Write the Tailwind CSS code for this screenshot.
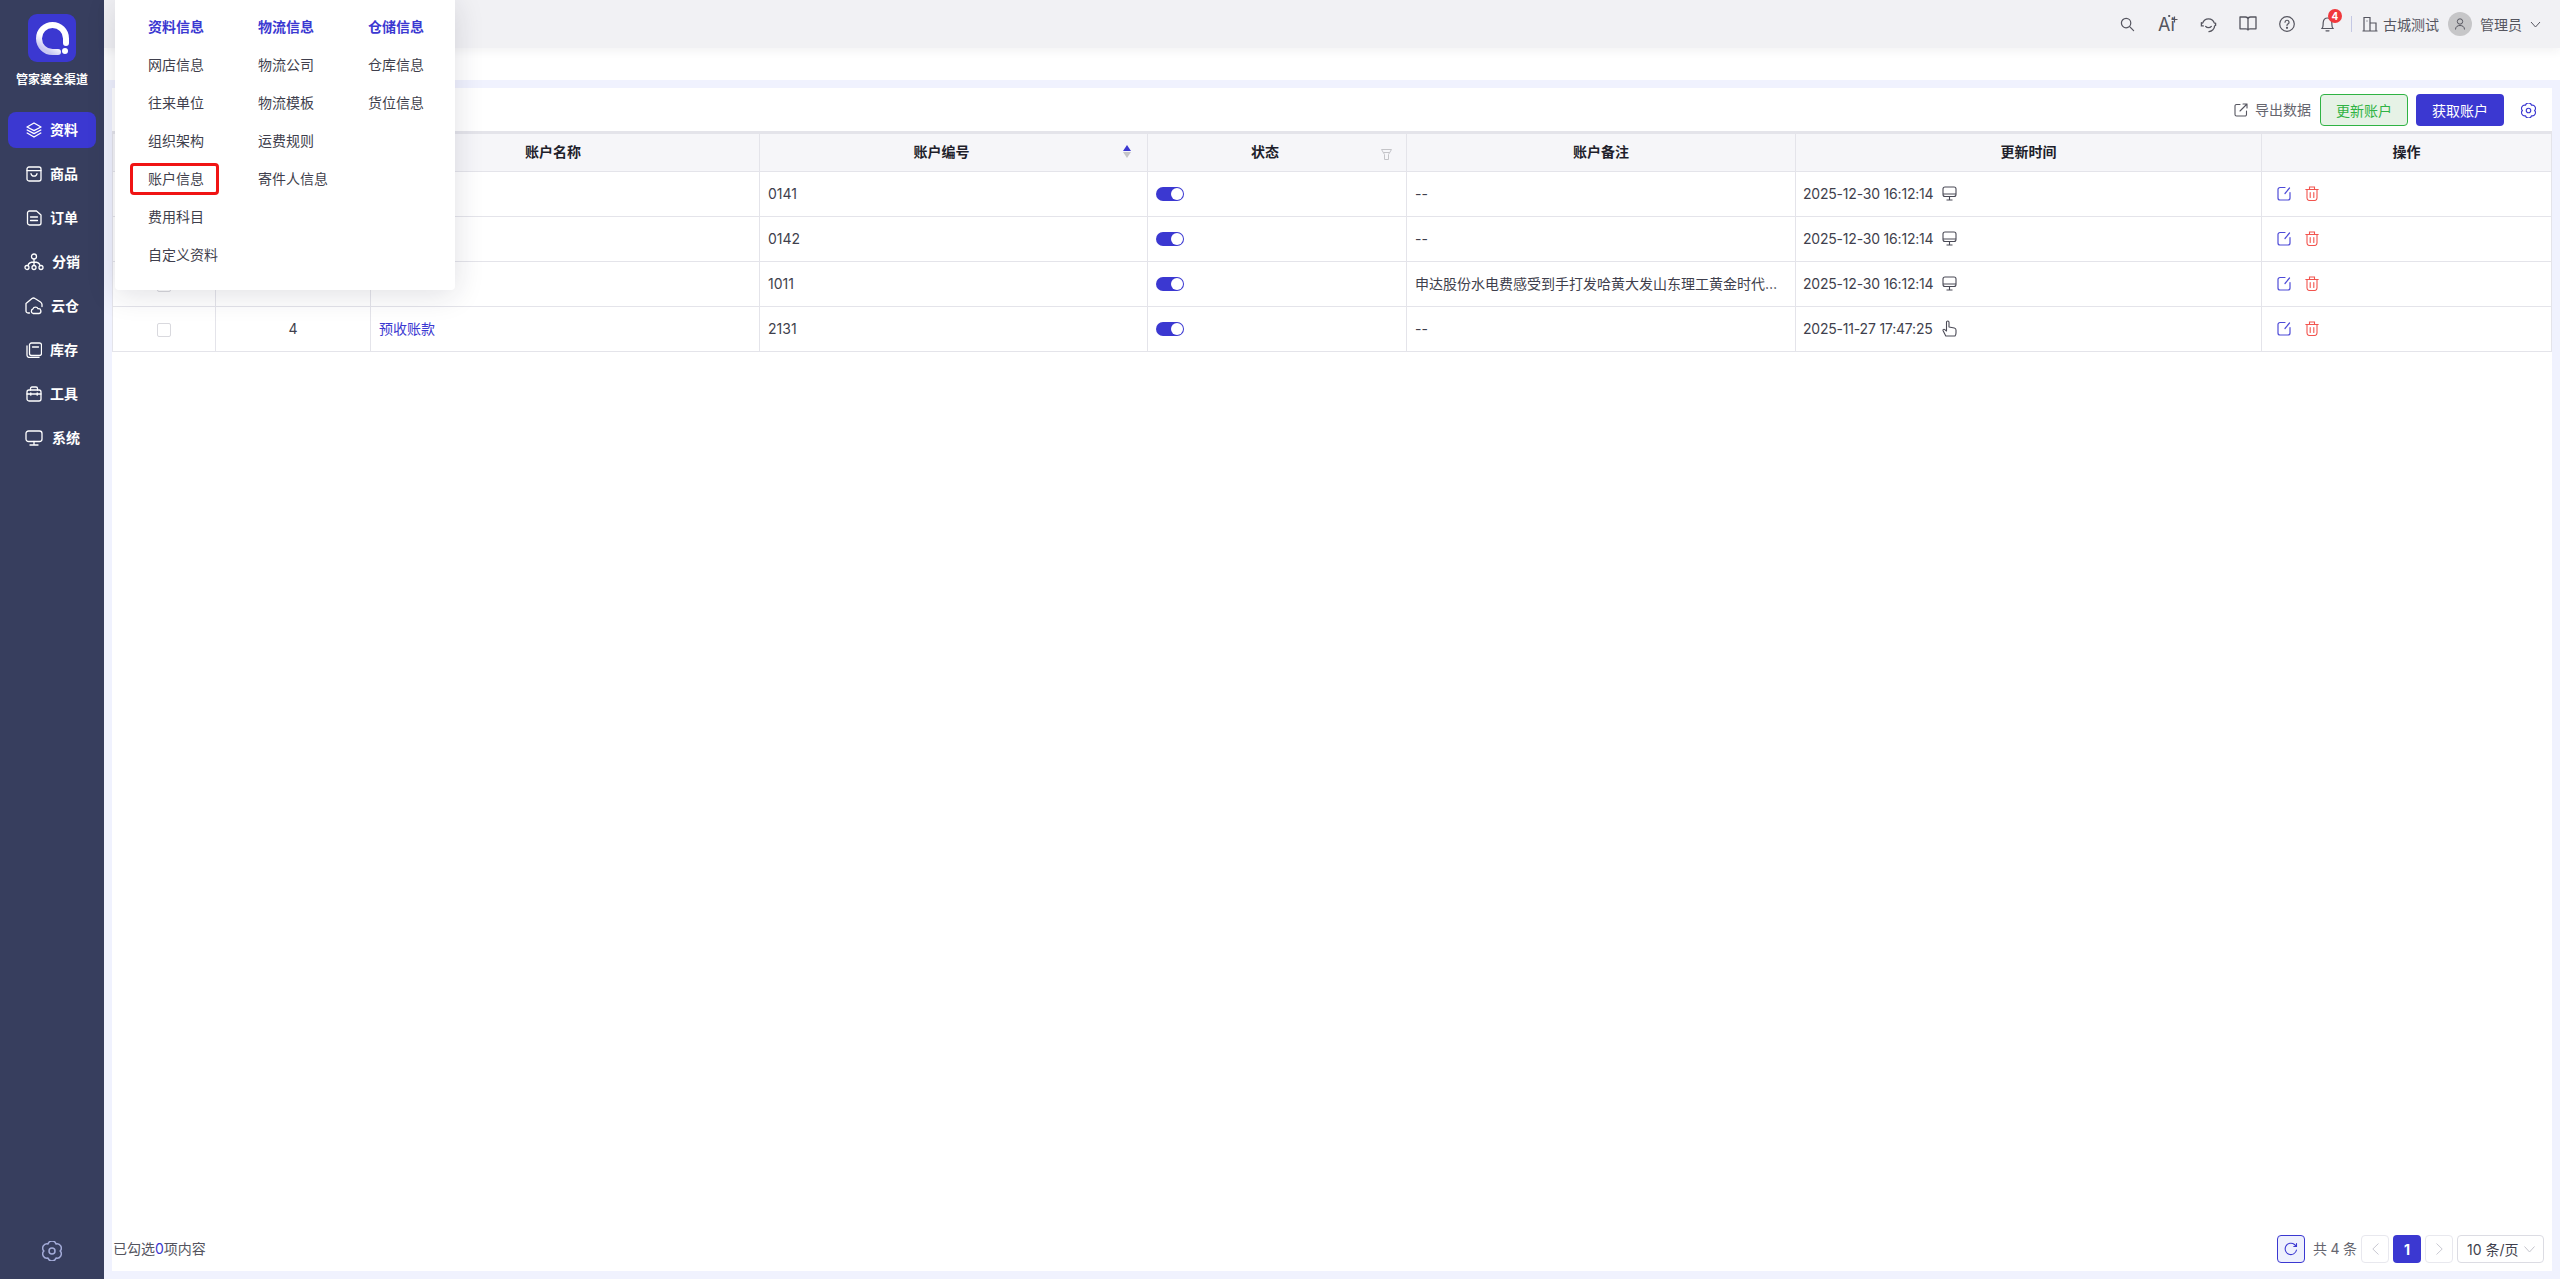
<!DOCTYPE html>
<html lang="zh-CN">
<head>
  <meta charset="UTF-8" />
  <title>账户信息</title>
  <script src="https://cdn.jsdelivr.net/npm/@tailwindcss/browser@4"></script>
</head>
<body class="h-screen overflow-hidden flex bg-white text-[14px] text-[#3f3f4d] font-[Inter,'Noto_Sans_CJK_SC',sans-serif]">

  <!-- left menu -->
  <aside class="w-[104px] shrink-0 bg-[#373e5e] flex flex-col items-center text-white">
    <div class="mt-[14px] w-[48px] h-[48px] rounded-[9px] bg-[#3b38d1] flex items-center justify-center">
      <svg width="36" height="36" viewBox="0 0 36 36" fill="none">
        <defs><linearGradient id="lg" x1="0.7" y1="0.1" x2="0.2" y2="0.9"><stop offset="0" stop-color="#fff"/><stop offset="0.6" stop-color="#fff"/><stop offset="1" stop-color="#c9c8f2"/></linearGradient></defs>
        <path d="M24 32H18.500A13.500 13.500 0 1 1 32 18.500V23" stroke="url(#lg)" stroke-width="6" stroke-linecap="round"/>
        <circle cx="31" cy="31" r="3" fill="#fff"/>
      </svg>
    </div>
    <div class="mt-[10px] text-[12px] leading-[16px] font-bold whitespace-nowrap">管家婆全渠道</div>

    <nav class="mt-[24px] w-[88px] flex flex-col gap-[8px] font-bold">
      <a class="h-[36px] rounded-[8px] bg-[#3b38d1] flex items-center pl-[18px] gap-[8px]">
        <svg class="w-[16px] h-[16px]" viewBox="0 0 16 16" fill="none" stroke="#fff" stroke-width="1.4" stroke-linejoin="round" stroke-linecap="round"><path d="M8 1 15 5 8 8.600 1 5Z"/><path d="M1.200 8 8 11.600 14.800 8"/><path d="M1.200 11 8 15 14.800 11"/></svg>
        <span class="mb-[2px]">资料</span>
      </a>
      <a class="h-[36px] flex items-center pl-[18px] gap-[8px]">
        <svg class="w-[16px] h-[16px]" viewBox="0 0 16 16" fill="none" stroke="#fff" stroke-width="1.3" stroke-linecap="round"><rect x="1" y="1" width="14" height="14" rx="2"/><path d="M1 4.600H15M5 7.600C5.600 11 10.400 11 11 7.600"/></svg>
        <span class="mb-[2px]">商品</span>
      </a>
      <a class="h-[36px] flex items-center pl-[18px] gap-[8px]">
        <svg class="w-[16px] h-[16px]" viewBox="0 0 16 16" fill="none" stroke="#fff" stroke-width="1.3" stroke-linecap="round" stroke-linejoin="round"><path d="M3.500 1H10.500L15 5V13A2 2 0 0 1 13 15H3.500A2 2 0 0 1 1.500 13V3A2 2 0 0 1 3.500 1Z"/><path d="M4.500 7H11.500M4.500 10.500H11.500"/></svg>
        <span class="mb-[2px]">订单</span>
      </a>
      <a class="h-[36px] flex items-center pl-[16px] gap-[8px]">
        <svg class="w-[20px] h-[18px]" viewBox="0 0 20 18" fill="none" stroke="#fff" stroke-width="1.3" stroke-linecap="round"><circle cx="10" cy="3.500" r="2.500"/><circle cx="3" cy="14.500" r="2"/><circle cx="10" cy="14.500" r="2"/><circle cx="17" cy="14.500" r="2"/><path d="M10 6V12.500M4 12.500C4.500 9.800 7 9 10 9S15.500 9.800 16 12.500"/></svg>
        <span class="mb-[2px]">分销</span>
      </a>
      <a class="h-[36px] flex items-center pl-[17px] gap-[8px]">
        <svg class="w-[18px] h-[18px]" viewBox="0 0 18 18" fill="none" stroke="#fff" stroke-width="1.3" stroke-linecap="round" stroke-linejoin="round"><path d="M4.500 16H3A2 2 0 0 1 1 14V6.500L7 1.500C8 .8 9 .8 10 1.500L15.500 5C16.500 5.700 17 6.500 17 7.500V9.500"/><path d="M8 16.500A2.500 2.500 0 0 1 8 11.800C8.600 9.600 12.400 9.600 13 11.800A2.400 2.400 0 0 1 14 16.500Z"/></svg>
        <span class="mb-[2px]">云仓</span>
      </a>
      <a class="h-[36px] flex items-center pl-[18px] gap-[8px]">
        <svg class="w-[16px] h-[16px]" viewBox="0 0 16 16" fill="none" stroke="#fff" stroke-width="1.3" stroke-linecap="round"><rect x="3.500" y="1" width="12" height="12.500" rx="2"/><path d="M1 4V13A2.500 2.500 0 0 0 3.500 15.500H13M6.500 5H12.500"/></svg>
        <span class="mb-[2px]">库存</span>
      </a>
      <a class="h-[36px] flex items-center pl-[18px] gap-[8px]">
        <svg class="w-[16px] h-[16px]" viewBox="0 0 16 16" fill="none" stroke="#fff" stroke-width="1.3" stroke-linecap="round"><rect x="1" y="4" width="14" height="11" rx="2"/><path d="M4.500 4V2.500A1.500 1.500 0 0 1 6 1H10A1.500 1.500 0 0 1 11.500 2.500V4M1 8H15M4.800 7V9.200M11.200 7V9.200"/></svg>
        <span class="mb-[2px]">工具</span>
      </a>
      <a class="h-[36px] flex items-center pl-[17px] gap-[9px]">
        <svg class="w-[18px] h-[16px]" viewBox="0 0 18 16" fill="none" stroke="#fff" stroke-width="1.3" stroke-linecap="round"><rect x="1" y="1" width="16" height="10.500" rx="2.500"/><path d="M9 11.500V15M5 15H13"/></svg>
        <span class="mb-[2px]">系统</span>
      </a>
    </nav>

    <svg class="mt-auto mb-[18px] w-[20px] h-[20px]" viewBox="0 0 16 16" fill="none" stroke="#a3abd8" stroke-width="1.200" stroke-linejoin="round"><path d="M14.500 8A3.400 3.400 0 0 1 11.250 13.630A3.400 3.400 0 0 1 4.750 13.630A3.400 3.400 0 0 1 1.500 8A3.400 3.400 0 0 1 4.750 2.370A3.400 3.400 0 0 1 11.250 2.370A3.400 3.400 0 0 1 14.500 8Z"/><circle cx="8" cy="8" r="2.400"/></svg>
  </aside>

  <div class="flex-1 min-w-0 flex flex-col">
    <!-- top bar -->
    <header class="h-[48px] shrink-0 bg-[#f1f1f4] shadow-[0_4px_8px_rgba(40,40,60,0.05)] relative z-10 flex items-center justify-end pr-[19px] text-[#55555f]">
      <svg class="w-[15px] h-[15px] mr-[23px]" viewBox="0 0 16 16" fill="none" stroke="#55555f" stroke-width="1.3" stroke-linecap="round"><circle cx="6.500" cy="6.500" r="5"/><path d="M10.300 10.300 14.500 14.500"/></svg>
      <div class="relative w-[20px] h-[20px] mr-[22px] text-[18px] leading-[21px] text-[#55555f]">Ai
        <svg class="absolute left-[10px] top-[1px] w-[10px] h-[8px]" viewBox="0 0 10 8" fill="none" stroke="#55555f" stroke-width="1.200"><path d="M6.500 1.500V7.500M3.500 4.500H9.500"/><circle cx="1.200" cy="1" r=".5"/></svg>
      </div>
      <svg class="w-[17px] h-[17px] mr-[22px]" viewBox="0 0 18 18" fill="none" stroke="#55555f" stroke-width="1.4" stroke-linecap="round"><path d="M2.800 7.500A6.500 6.500 0 0 1 15.200 7.500"/><path d="M15.500 10.500A6.500 6.500 0 0 1 9.500 16.500"/><path d="M1.500 7V10.500H3.500M16.500 7.500V10"/><path d="M6 11C7.500 12.800 10.500 12.800 12 11"/></svg>
      <svg class="w-[18px] h-[16px] mr-[22px]" viewBox="0 0 18 16" fill="none" stroke="#55555f" stroke-width="1.3" stroke-linejoin="round"><path d="M1 1H6.500C8 1 9 1.800 9 3.200V14C9 13 8 12.800 7 12.800H1ZM17 1H11.500C10 1 9 1.800 9 3.200V14C9 13 10 12.800 11 12.800H17Z"/></svg>
      <svg class="w-[16px] h-[16px] mr-[26px]" viewBox="0 0 16 16" fill="none" stroke="#55555f" stroke-width="1.200" stroke-linecap="round"><circle cx="8" cy="8" r="7.300"/><path d="M6 6.200A2 2 0 1 1 8.500 8.200C8 8.500 8 9 8 9.600"/><circle cx="8" cy="11.800" r=".5" fill="#55555f"/></svg>
      <div class="relative w-[13px] h-[16px] mr-[17px]">
        <svg class="w-[13px] h-[16px]" viewBox="0 0 13 16" fill="none" stroke="#55555f" stroke-width="1.200" stroke-linecap="round"><path d="M1 12.500C2.500 11 2 9 2.200 6.500 2.500 3.500 4 2 6.500 2S10.500 3.500 10.800 6.500C11 9 10.500 11 12 12.500ZM5 14.800H8"/></svg>
        <span class="absolute left-[7px] top-[-7px] w-[14px] h-[14px] rounded-full bg-[#f0383c] text-white text-[10px] font-bold leading-[14px] text-center">4</span>
      </div>
      <div class="w-px h-[16px] bg-[#c4c8e4] mr-[10px]"></div>
      <svg class="w-[16px] h-[16px] mr-[5px]" viewBox="0 0 16 16" fill="none" stroke="#55555f" stroke-width="1.200"><path d="M.5 15H15.500M2 15V1.500H8V15M8 7H14V15M4.500 5H5.500"/></svg>
      <span class="mr-[9px]">古城测试</span>
      <div class="w-[24px] h-[24px] rounded-full bg-[#c6c6c8] flex items-center justify-center mr-[8px]">
        <svg class="w-[12px] h-[12px]" viewBox="0 0 12 12" fill="none" stroke="#55555f" stroke-width="1"><circle cx="6" cy="3.500" r="2.700"/><path d="M1.500 11.500C1.500 8.800 3.500 7.500 6 7.500S10.500 8.800 10.500 11.500"/></svg>
      </div>
      <span class="mr-[8px]">管理员</span>
      <svg class="w-[11px] h-[7px]" viewBox="0 0 11 7" fill="none" stroke="#55555f" stroke-width="1"><path d="M1 1 5.500 6 10 1"/></svg>
    </header>

    <div class="h-[32px] shrink-0 bg-white"></div>

    <main class="flex-1 min-h-0 bg-[#f0f2fe] p-[8px] flex">
      <section class="flex-1 min-w-0 bg-white flex flex-col">
        <!-- toolbar -->
        <div class="h-[43px] shrink-0 flex items-start justify-end pt-[6px] pr-[16px]">
          <svg class="w-[14px] h-[14px] mt-[9px] mr-[7px]" viewBox="0 0 14 14" fill="none" stroke="#55555f" stroke-width="1.100" stroke-linecap="round" stroke-linejoin="round"><path d="M6 1.500H2.500A1.500 1.500 0 0 0 1 3V11.500A1.500 1.500 0 0 0 2.500 13H11A1.500 1.500 0 0 0 12.500 11.500V8M6 8 13 1M9 1H13V5"/></svg>
          <span class="h-[32px] leading-[32px] text-[#66666f] mr-[9px]">导出数据</span>
          <button class="w-[88px] h-[32px] rounded-[4px] border border-[#2fb344] bg-[#e6f2e6] text-[#2fb344] mr-[8px]">更新账户</button>
          <button class="w-[88px] h-[32px] rounded-[4px] bg-[#3b38d1] text-white mr-[17px]">获取账户</button>
          <svg class="w-[15px] h-[15px] mt-[9px]" viewBox="0 0 16 16" fill="none" stroke="#3b38d1" stroke-width="1.200" stroke-linejoin="round"><path d="M14.500 8A3.400 3.400 0 0 1 11.250 13.630A3.400 3.400 0 0 1 4.750 13.630A3.400 3.400 0 0 1 1.500 8A3.400 3.400 0 0 1 4.750 2.370A3.400 3.400 0 0 1 11.250 2.370A3.400 3.400 0 0 1 14.500 8Z"/><circle cx="8" cy="8" r="2.400"/></svg>
        </div>

        <!-- table -->
        <div class="flex-1 min-h-0">
          <table class="w-full table-fixed border-collapse border-t-[3px] border-t-[#e4e4ea]">
            <colgroup>
              <col class="w-[103px]"/><col class="w-[155px]"/><col class="w-[389px]"/><col class="w-[388px]"/><col class="w-[259px]"/><col class="w-[389px]"/><col class="w-[466px]"/><col/>
            </colgroup>
            <thead>
              <tr class="h-[39px] bg-[#f6f6f9] text-[#1f1f2b]">
                <th class="border border-[#e4e4ea] font-bold"></th>
                <th class="border border-[#e4e4ea] font-bold"></th>
                <th class="border border-[#e4e4ea] font-bold pr-[24px] pb-[2px]">账户名称</th>
                <th class="border border-[#e4e4ea] font-bold relative pr-[24px] pb-[2px]">账户编号
                  <span class="absolute right-[16px] top-[11px] flex flex-col gap-[1px]">
                    <span class="w-0 h-0 border-x-[4px] border-x-transparent border-b-[6px] border-b-[#3b38d1]"></span>
                    <span class="w-0 h-0 border-x-[4px] border-x-transparent border-t-[6px] border-t-[#c4c4c8]"></span>
                  </span>
                </th>
                <th class="border border-[#e4e4ea] font-bold relative pr-[24px] pb-[2px]">状态
                  <svg class="absolute right-[14px] top-[15px] w-[11px] h-[11px]" viewBox="0 0 11 11" fill="none" stroke="#c4c4c8" stroke-width="1"><path d="M.5 .5H10.500L7.500 5.500V10.500H3.500V5.500ZM2.500 3.500H8.500"/></svg>
                </th>
                <th class="border border-[#e4e4ea] font-bold pb-[2px]">账户备注</th>
                <th class="border border-[#e4e4ea] font-bold pb-[2px]">更新时间</th>
                <th class="border border-[#e4e4ea] font-bold pb-[2px]">操作</th>
              </tr>
            </thead>
            <tbody id="rows"></tbody>
          </table>
        </div>

        <!-- footer -->
        <div class="h-[37px] shrink-0 flex items-start pt-[1px] pr-[8px] pl-[1px]">
          <span class="mt-[4px] leading-[20px] text-[#55555f]">已勾选<span class="text-[#3b38d1]">0</span>项内容</span>
          <div class="ml-auto flex items-start">
            <button class="w-[28px] h-[28px] rounded-[4px] border border-[#3b38d1] bg-[#eef0fd] flex items-center justify-center mr-[8px]">
              <svg class="w-[14px] h-[14px]" viewBox="0 0 14 14" fill="none" stroke="#3b38d1" stroke-width="1.100" stroke-linecap="round"><path d="M12.500 8A5.700 5.700 0 1 1 10.500 2.500L12.500 4.500M12.500 1.500V4.500H9.800"/></svg>
            </button>
            <span class="w-[43px] h-[28px] leading-[28px] tracking-[-0.2px] text-[#66666f] whitespace-pre mr-[5px]">共 4 条</span>
            <button class="w-[28px] h-[28px] rounded-[4px] border border-[#e8e8ee] flex items-center justify-center mr-[4px]">
              <svg class="w-[7px] h-[12px]" viewBox="0 0 7 12" fill="none" stroke="#c9c9d2" stroke-width="1"><path d="M6.500 .5 .8 6 6.500 11.500"/></svg>
            </button>
            <button class="w-[28px] h-[28px] rounded-[4px] bg-[#3b38d1] text-white font-bold mr-[4px]">1</button>
            <button class="w-[28px] h-[28px] rounded-[4px] border border-[#e8e8ee] flex items-center justify-center mr-[4px]">
              <svg class="w-[7px] h-[12px]" viewBox="0 0 7 12" fill="none" stroke="#c9c9d2" stroke-width="1"><path d="M.5 .5 6.200 6 .5 11.500"/></svg>
            </button>
            <div class="w-[87px] h-[28px] rounded-[4px] border border-[#dcdce3] flex items-center pl-[9px]">
              <span class="whitespace-pre">10 条/页</span>
              <svg class="w-[11px] h-[7px] ml-[5px]" viewBox="0 0 11 7" fill="none" stroke="#c4c4cc" stroke-width="1"><path d="M.5 .5 5.500 6 10.500 .5"/></svg>
            </div>
          </div>
        </div>
      </section>
    </main>
  </div>

  <!-- open menu -->
  <div class="absolute left-[115px] top-0 w-[340px] h-[290px] bg-white rounded-b-[4px] shadow-[0_4px_30px_rgba(30,30,60,0.14)] z-20 pl-[33px] pt-[7px] grid grid-cols-[110px_110px_110px] auto-rows-[38px] items-center">
    <div class="text-[#3b38d1] font-bold">资料信息</div><div class="text-[#3b38d1] font-bold">物流信息</div><div class="text-[#3b38d1] font-bold">仓储信息</div>
    <div>网店信息</div><div>物流公司</div><div>仓库信息</div>
    <div>往来单位</div><div>物流模板</div><div>货位信息</div>
    <div>组织架构</div><div>运费规则</div><div></div>
    <div class="relative">账户信息<span class="absolute left-[-18px] top-[-5px] w-[89px] h-[32px] border-[3px] border-[#f01414] rounded-[4px]"></span></div><div>寄件人信息</div><div></div>
    <div>费用科目</div><div></div><div></div>
    <div>自定义资料</div><div></div><div></div>
  </div>

  <script>
    const data = [
      { no: 1, name: "", code: "0141", note: "--", time: "2025-12-30 16:12:14", hand: false },
      { no: 2, name: "", code: "0142", note: "--", time: "2025-12-30 16:12:14", hand: false },
      { no: 3, name: "", code: "1011", note: "申达股份水电费感受到手打发哈黄大发山东理工黄金时代的发射点发生的", time: "2025-12-30 16:12:14", hand: false },
      { no: 4, name: "预收账款", code: "2131", note: "--", time: "2025-11-27 17:47:25", hand: true },
    ];
    const pc = `<svg class="inline-block ml-[9px] w-[15px] h-[15px] align-[-2px]" viewBox="0 0 15 15" fill="none" stroke="#4a4a56" stroke-width="1.100"><rect x="1" y="1" width="13" height="9.500" rx="2"/><path d="M1 8H14M7.500 10.500V14M4.500 14H10.500"/></svg>`;
    const hand = `<svg class="inline-block ml-[9px] w-[15px] h-[17px] align-[-3px]" viewBox="0 0 15 17" fill="none" stroke="#4a4a56" stroke-width="1.100" stroke-linejoin="round"><path d="M3.800 16 1 10.500C.6 9.500 2 8.800 2.800 9.600L4.500 11V2.300C4.500 .6 7 .6 7 2.300V7L12.300 8C13.500 8.300 14 9 14 10V13C14 14.500 13.500 15.300 13 16Z"/></svg>`;
    const edit = `<svg class="w-[14px] h-[15px]" viewBox="0 0 14 15" fill="none" stroke="#4f4cd8" stroke-width="1.200" stroke-linecap="round"><path d="M8 1.500H3A2 2 0 0 0 1 3.500V12A2 2 0 0 0 3 14H11A2 2 0 0 0 13 12V6.500M8 7.500 12.500 2"/></svg>`;
    const del = `<svg class="w-[14px] h-[15px]" viewBox="0 0 14 15" fill="none" stroke="#f2554f" stroke-width="1.100" stroke-linecap="round"><path d="M.8 3.500H13.200M4.500 3.500V1H9.500V3.500M2 3.500V12A2.500 2.500 0 0 0 4.500 14.500H9.500A2.500 2.500 0 0 0 12 12V3.500M5.200 6.500V11.500M8.800 6.500V11.500"/></svg>`;
    document.getElementById("rows").innerHTML = data.map(r => `
      <tr class="h-[45px]">
        <td class="border border-[#e4e4ea] text-center pb-[2px]"><span class="inline-block w-[14px] h-[14px] rounded-[2px] border border-[#d9d9de] align-middle"></span></td>
        <td class="border border-[#e4e4ea] text-center pb-[2px]">${r.no}</td>
        <td class="border border-[#e4e4ea] px-[8px] pb-[2px] text-[#3b38d1]">${r.name}</td>
        <td class="border border-[#e4e4ea] px-[8px] pb-[2px]">${r.code}</td>
        <td class="border border-[#e4e4ea] px-[8px]"><span class="flex items-center justify-end w-[28px] h-[14px] rounded-full bg-[#3b38d1] pr-[1px]"><span class="w-[12px] h-[12px] rounded-full bg-white"></span></span></td>
        <td class="border border-[#e4e4ea] px-[8px] pb-[2px] truncate">${r.note}</td>
        <td class="border border-[#e4e4ea] pl-[7px] pb-[2px] whitespace-nowrap"><span class="tracking-[-0.2px]">${r.time}</span>${r.hand ? hand : pc}</td>
        <td class="border border-[#e4e4ea] px-[15px] pb-[2px]"><span class="flex items-center gap-[14px]">${edit}${del}</span></td>
      </tr>`).join("");
  </script>
</body>
</html>
